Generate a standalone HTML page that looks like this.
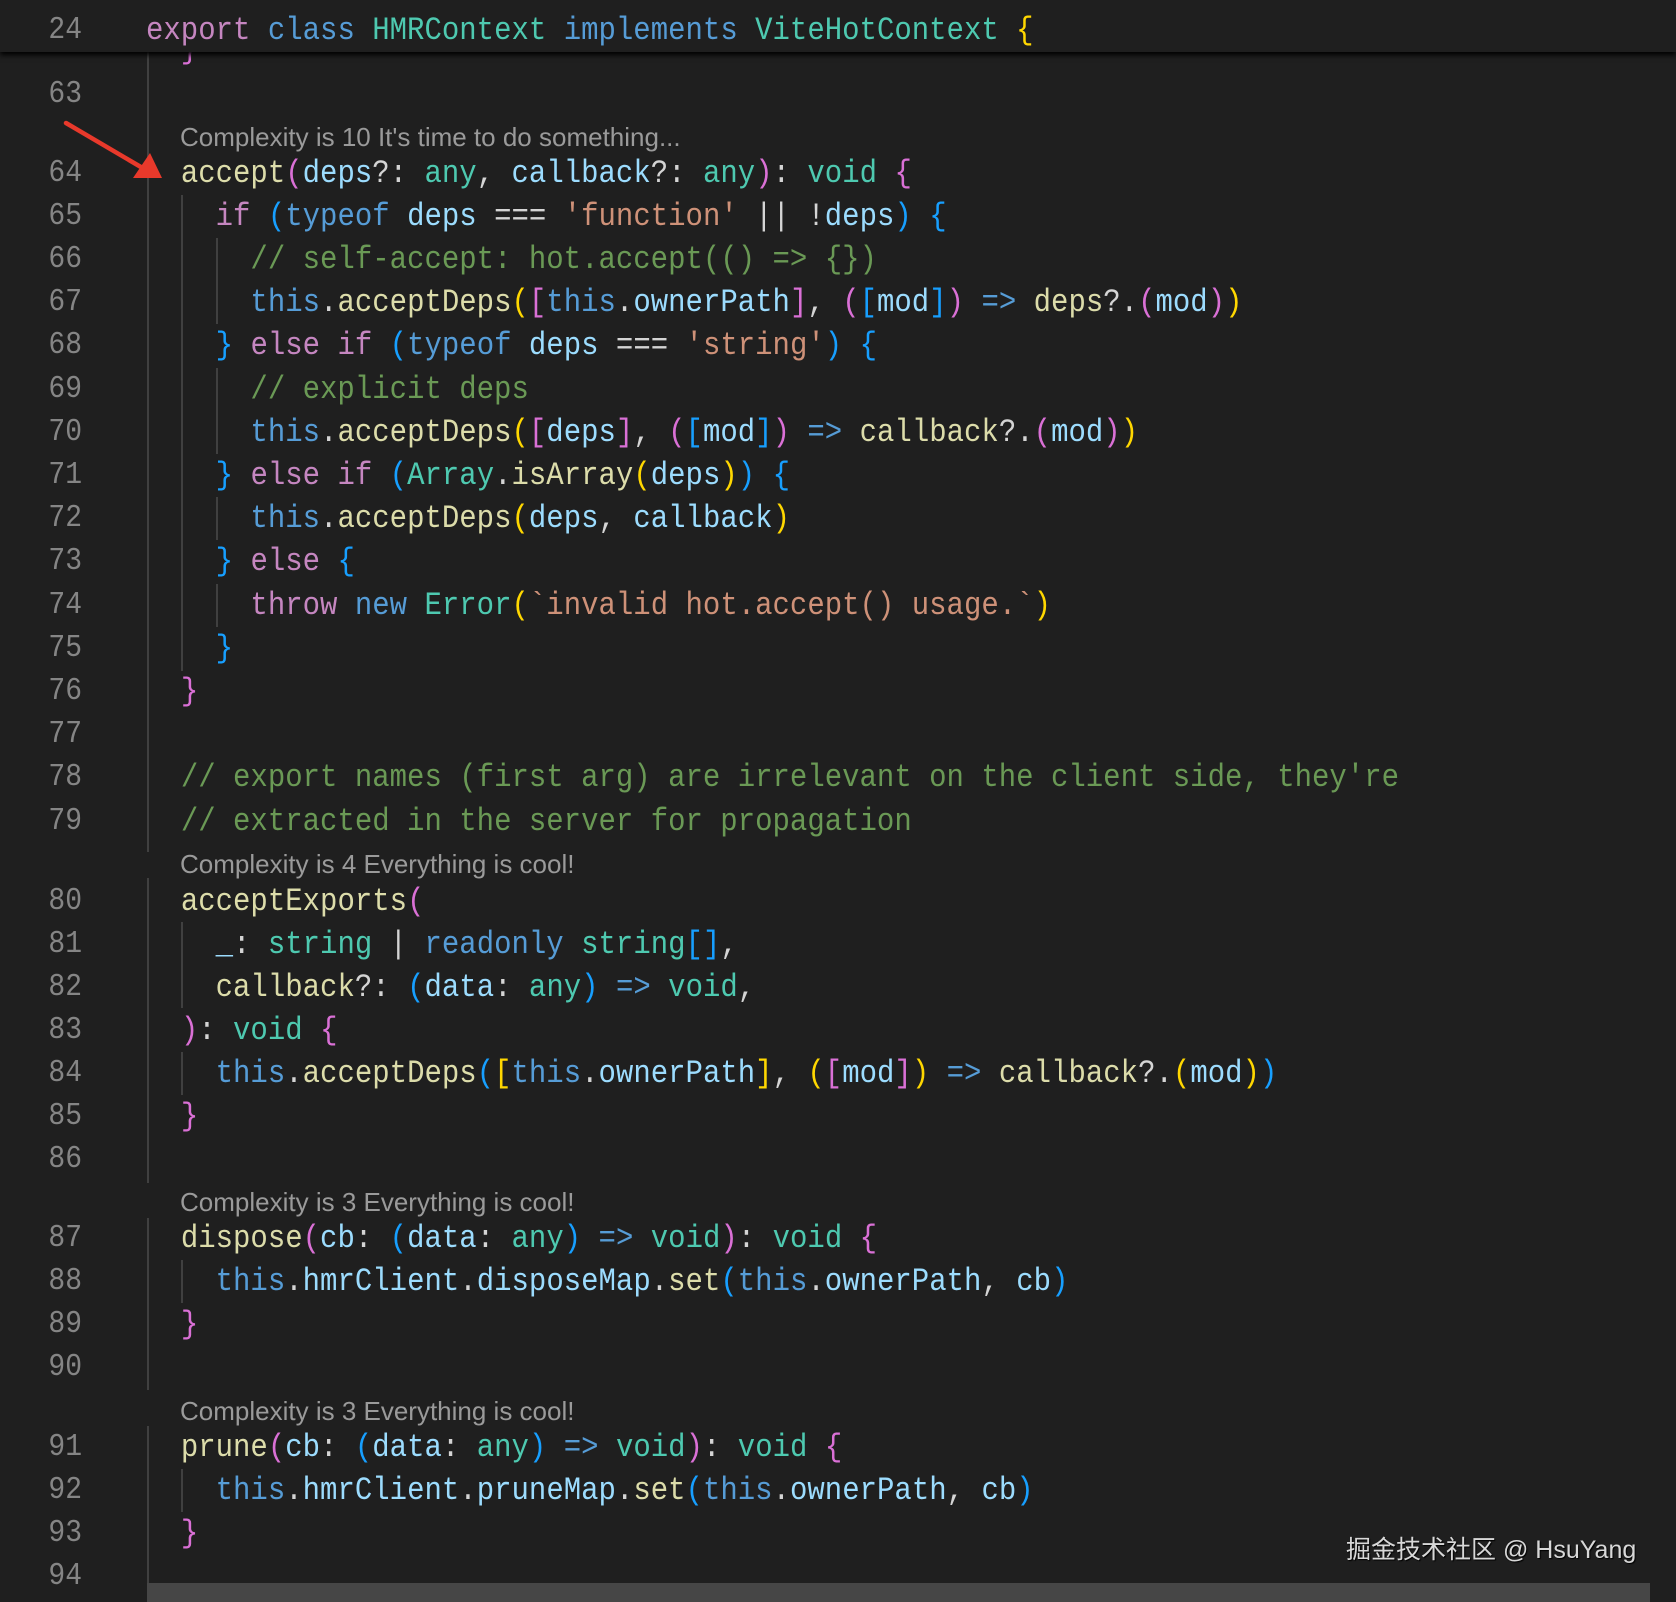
<!DOCTYPE html>
<html><head><meta charset="utf-8"><style>
html,body{margin:0;padding:0;background:#1f1f1f;width:1676px;height:1602px;overflow:hidden;position:relative}
.l{position:absolute;left:146px;height:43px;line-height:43px;font-family:"Liberation Mono",monospace;font-size:29px;color:#d4d4d4;white-space:pre;transform:scaleY(1.12);transform-origin:0 50%}
.n{position:absolute;width:82px;text-align:right;left:0;height:43px;line-height:43px;font-family:"Liberation Mono",monospace;font-size:28px;color:#858585;transform:scaleY(1.12);transform-origin:0 50%}
.cl{position:absolute;left:180px;font-family:"Liberation Sans",sans-serif;font-size:26px;color:#9a9a9a;height:30px;line-height:30px}
.g{position:absolute;width:1.5px;background:#404040}
.k{color:#c586c0}.b{color:#569cd6}.t{color:#4ec9b0}.f{color:#dcdcaa}.v{color:#9cdcfe}.s{color:#ce9178}.c{color:#6a9955}
.y{color:#ffd700}.p{color:#da70d6}.q{color:#179fff}
#hdr{position:absolute;left:0;top:0;width:1676px;height:52px;background:#1f1f1f;box-shadow:0 3px 5px #000;z-index:5}
</style></head><body>
<div id="hdr">
<div class="n" style="top:9px">24</div>
<div class="l" style="top:9px"><span class="k">export</span> <span class="b">class</span> <span class="t">HMRContext</span> <span class="b">implements</span> <span class="t">ViteHotContext</span> <span class="y">{</span></div>
</div>
<div class="l" style="top:28px"><span class="p">  }</span></div>

<div class="g" style="left:147px;top:52px;height:800px"></div>
<div class="g" style="left:147px;top:878px;height:305px"></div>
<div class="g" style="left:147px;top:1218px;height:172px"></div>
<div class="g" style="left:147px;top:1426px;height:176px"></div>
<div class="g" style="left:181px;top:195px;height:476px"></div>
<div class="g" style="left:216px;top:238px;height:86px"></div>
<div class="g" style="left:216px;top:368px;height:86px"></div>
<div class="g" style="left:216px;top:497px;height:43px"></div>
<div class="g" style="left:216px;top:584px;height:43px"></div>
<div class="g" style="left:181px;top:922px;height:86px"></div>
<div class="g" style="left:181px;top:1052px;height:43px"></div>
<div class="g" style="left:181px;top:1260px;height:43px"></div>
<div class="g" style="left:181px;top:1469px;height:43px"></div>

<div class="n" style="top:73px">63</div>
<div class="cl" style="top:122px">Complexity is 10 It's time to do something...</div>
<div class="n" style="top:152px">64</div><div class="l" style="top:152px">  <span class="f">accept</span><span class="p">(</span><span class="v">deps</span>?: <span class="t">any</span>, <span class="v">callback</span>?: <span class="t">any</span><span class="p">)</span>: <span class="t">void</span> <span class="p">{</span></div>
<div class="n" style="top:195px">65</div><div class="l" style="top:195px">    <span class="k">if</span> <span class="q">(</span><span class="b">typeof</span> <span class="v">deps</span> === <span class="s">'function'</span> || !<span class="v">deps</span><span class="q">)</span> <span class="q">{</span></div>
<div class="n" style="top:238px">66</div><div class="l" style="top:238px">      <span class="c">// self-accept: hot.accept(() =&gt; {})</span></div>
<div class="n" style="top:281px">67</div><div class="l" style="top:281px">      <span class="b">this</span>.<span class="f">acceptDeps</span><span class="y">(</span><span class="p">[</span><span class="b">this</span>.<span class="v">ownerPath</span><span class="p">]</span>, <span class="p">(</span><span class="q">[</span><span class="v">mod</span><span class="q">]</span><span class="p">)</span> <span class="b">=&gt;</span> <span class="f">deps</span>?.<span class="p">(</span><span class="v">mod</span><span class="p">)</span><span class="y">)</span></div>
<div class="n" style="top:324px">68</div><div class="l" style="top:324px">    <span class="q">}</span> <span class="k">else if</span> <span class="q">(</span><span class="b">typeof</span> <span class="v">deps</span> === <span class="s">'string'</span><span class="q">)</span> <span class="q">{</span></div>
<div class="n" style="top:368px">69</div><div class="l" style="top:368px">      <span class="c">// explicit deps</span></div>
<div class="n" style="top:411px">70</div><div class="l" style="top:411px">      <span class="b">this</span>.<span class="f">acceptDeps</span><span class="y">(</span><span class="p">[</span><span class="v">deps</span><span class="p">]</span>, <span class="p">(</span><span class="q">[</span><span class="v">mod</span><span class="q">]</span><span class="p">)</span> <span class="b">=&gt;</span> <span class="f">callback</span>?.<span class="p">(</span><span class="v">mod</span><span class="p">)</span><span class="y">)</span></div>
<div class="n" style="top:454px">71</div><div class="l" style="top:454px">    <span class="q">}</span> <span class="k">else if</span> <span class="q">(</span><span class="t">Array</span>.<span class="f">isArray</span><span class="y">(</span><span class="v">deps</span><span class="y">)</span><span class="q">)</span> <span class="q">{</span></div>
<div class="n" style="top:497px">72</div><div class="l" style="top:497px">      <span class="b">this</span>.<span class="f">acceptDeps</span><span class="y">(</span><span class="v">deps</span>, <span class="v">callback</span><span class="y">)</span></div>
<div class="n" style="top:540px">73</div><div class="l" style="top:540px">    <span class="q">}</span> <span class="k">else</span> <span class="q">{</span></div>
<div class="n" style="top:584px">74</div><div class="l" style="top:584px">      <span class="k">throw</span> <span class="b">new</span> <span class="t">Error</span><span class="y">(</span><span class="s">`invalid hot.accept() usage.`</span><span class="y">)</span></div>
<div class="n" style="top:627px">75</div><div class="l" style="top:627px">    <span class="q">}</span></div>
<div class="n" style="top:670px">76</div><div class="l" style="top:670px">  <span class="p">}</span></div>
<div class="n" style="top:713px">77</div>
<div class="n" style="top:756px">78</div><div class="l" style="top:756px">  <span class="c">// export names (first arg) are irrelevant on the client side, they're</span></div>
<div class="n" style="top:800px">79</div><div class="l" style="top:800px">  <span class="c">// extracted in the server for propagation</span></div>
<div class="cl" style="top:849px">Complexity is 4 Everything is cool!</div>
<div class="n" style="top:880px">80</div><div class="l" style="top:880px">  <span class="f">acceptExports</span><span class="p">(</span></div>
<div class="n" style="top:923px">81</div><div class="l" style="top:923px">    <span class="v">_</span>: <span class="t">string</span> | <span class="b">readonly</span> <span class="t">string</span><span class="q">[]</span>,</div>
<div class="n" style="top:966px">82</div><div class="l" style="top:966px">    <span class="f">callback</span>?: <span class="q">(</span><span class="v">data</span>: <span class="t">any</span><span class="q">)</span> <span class="b">=&gt;</span> <span class="t">void</span>,</div>
<div class="n" style="top:1009px">83</div><div class="l" style="top:1009px">  <span class="p">)</span>: <span class="t">void</span> <span class="p">{</span></div>
<div class="n" style="top:1052px">84</div><div class="l" style="top:1052px">    <span class="b">this</span>.<span class="f">acceptDeps</span><span class="q">(</span><span class="y">[</span><span class="b">this</span>.<span class="v">ownerPath</span><span class="y">]</span>, <span class="y">(</span><span class="p">[</span><span class="v">mod</span><span class="p">]</span><span class="y">)</span> <span class="b">=&gt;</span> <span class="f">callback</span>?.<span class="y">(</span><span class="v">mod</span><span class="y">)</span><span class="q">)</span></div>
<div class="n" style="top:1095px">85</div><div class="l" style="top:1095px">  <span class="p">}</span></div>
<div class="n" style="top:1138px">86</div>
<div class="cl" style="top:1187px">Complexity is 3 Everything is cool!</div>
<div class="n" style="top:1217px">87</div><div class="l" style="top:1217px">  <span class="f">dispose</span><span class="p">(</span><span class="v">cb</span>: <span class="q">(</span><span class="v">data</span>: <span class="t">any</span><span class="q">)</span> <span class="b">=&gt;</span> <span class="t">void</span><span class="p">)</span>: <span class="t">void</span> <span class="p">{</span></div>
<div class="n" style="top:1260px">88</div><div class="l" style="top:1260px">    <span class="b">this</span>.<span class="v">hmrClient</span>.<span class="v">disposeMap</span>.<span class="f">set</span><span class="q">(</span><span class="b">this</span>.<span class="v">ownerPath</span>, <span class="v">cb</span><span class="q">)</span></div>
<div class="n" style="top:1303px">89</div><div class="l" style="top:1303px">  <span class="p">}</span></div>
<div class="n" style="top:1346px">90</div>
<div class="cl" style="top:1396px">Complexity is 3 Everything is cool!</div>
<div class="n" style="top:1426px">91</div><div class="l" style="top:1426px">  <span class="f">prune</span><span class="p">(</span><span class="v">cb</span>: <span class="q">(</span><span class="v">data</span>: <span class="t">any</span><span class="q">)</span> <span class="b">=&gt;</span> <span class="t">void</span><span class="p">)</span>: <span class="t">void</span> <span class="p">{</span></div>
<div class="n" style="top:1469px">92</div><div class="l" style="top:1469px">    <span class="b">this</span>.<span class="v">hmrClient</span>.<span class="v">pruneMap</span>.<span class="f">set</span><span class="q">(</span><span class="b">this</span>.<span class="v">ownerPath</span>, <span class="v">cb</span><span class="q">)</span></div>
<div class="n" style="top:1512px">93</div><div class="l" style="top:1512px">  <span class="p">}</span></div>
<div class="n" style="top:1555px">94</div>

<div style="position:absolute;left:147px;top:1583px;width:1503px;height:19px;background:#464646"></div>
<div style="position:absolute;left:1346px;top:1530px;font-family:'Liberation Sans','Noto Sans CJK SC',sans-serif;font-size:25px;color:#d8d8d8;text-shadow:1px 1px 1px #000">掘金技术社区 @ HsuYang</div>

<svg style="position:absolute;left:0;top:0" width="200" height="200">
<line x1="66" y1="123" x2="146" y2="170" stroke="#e8392b" stroke-width="4.5" stroke-linecap="round"/>
<polygon points="162,178 133,178 150,153" fill="#e8392b"/>
</svg>
</body></html>
